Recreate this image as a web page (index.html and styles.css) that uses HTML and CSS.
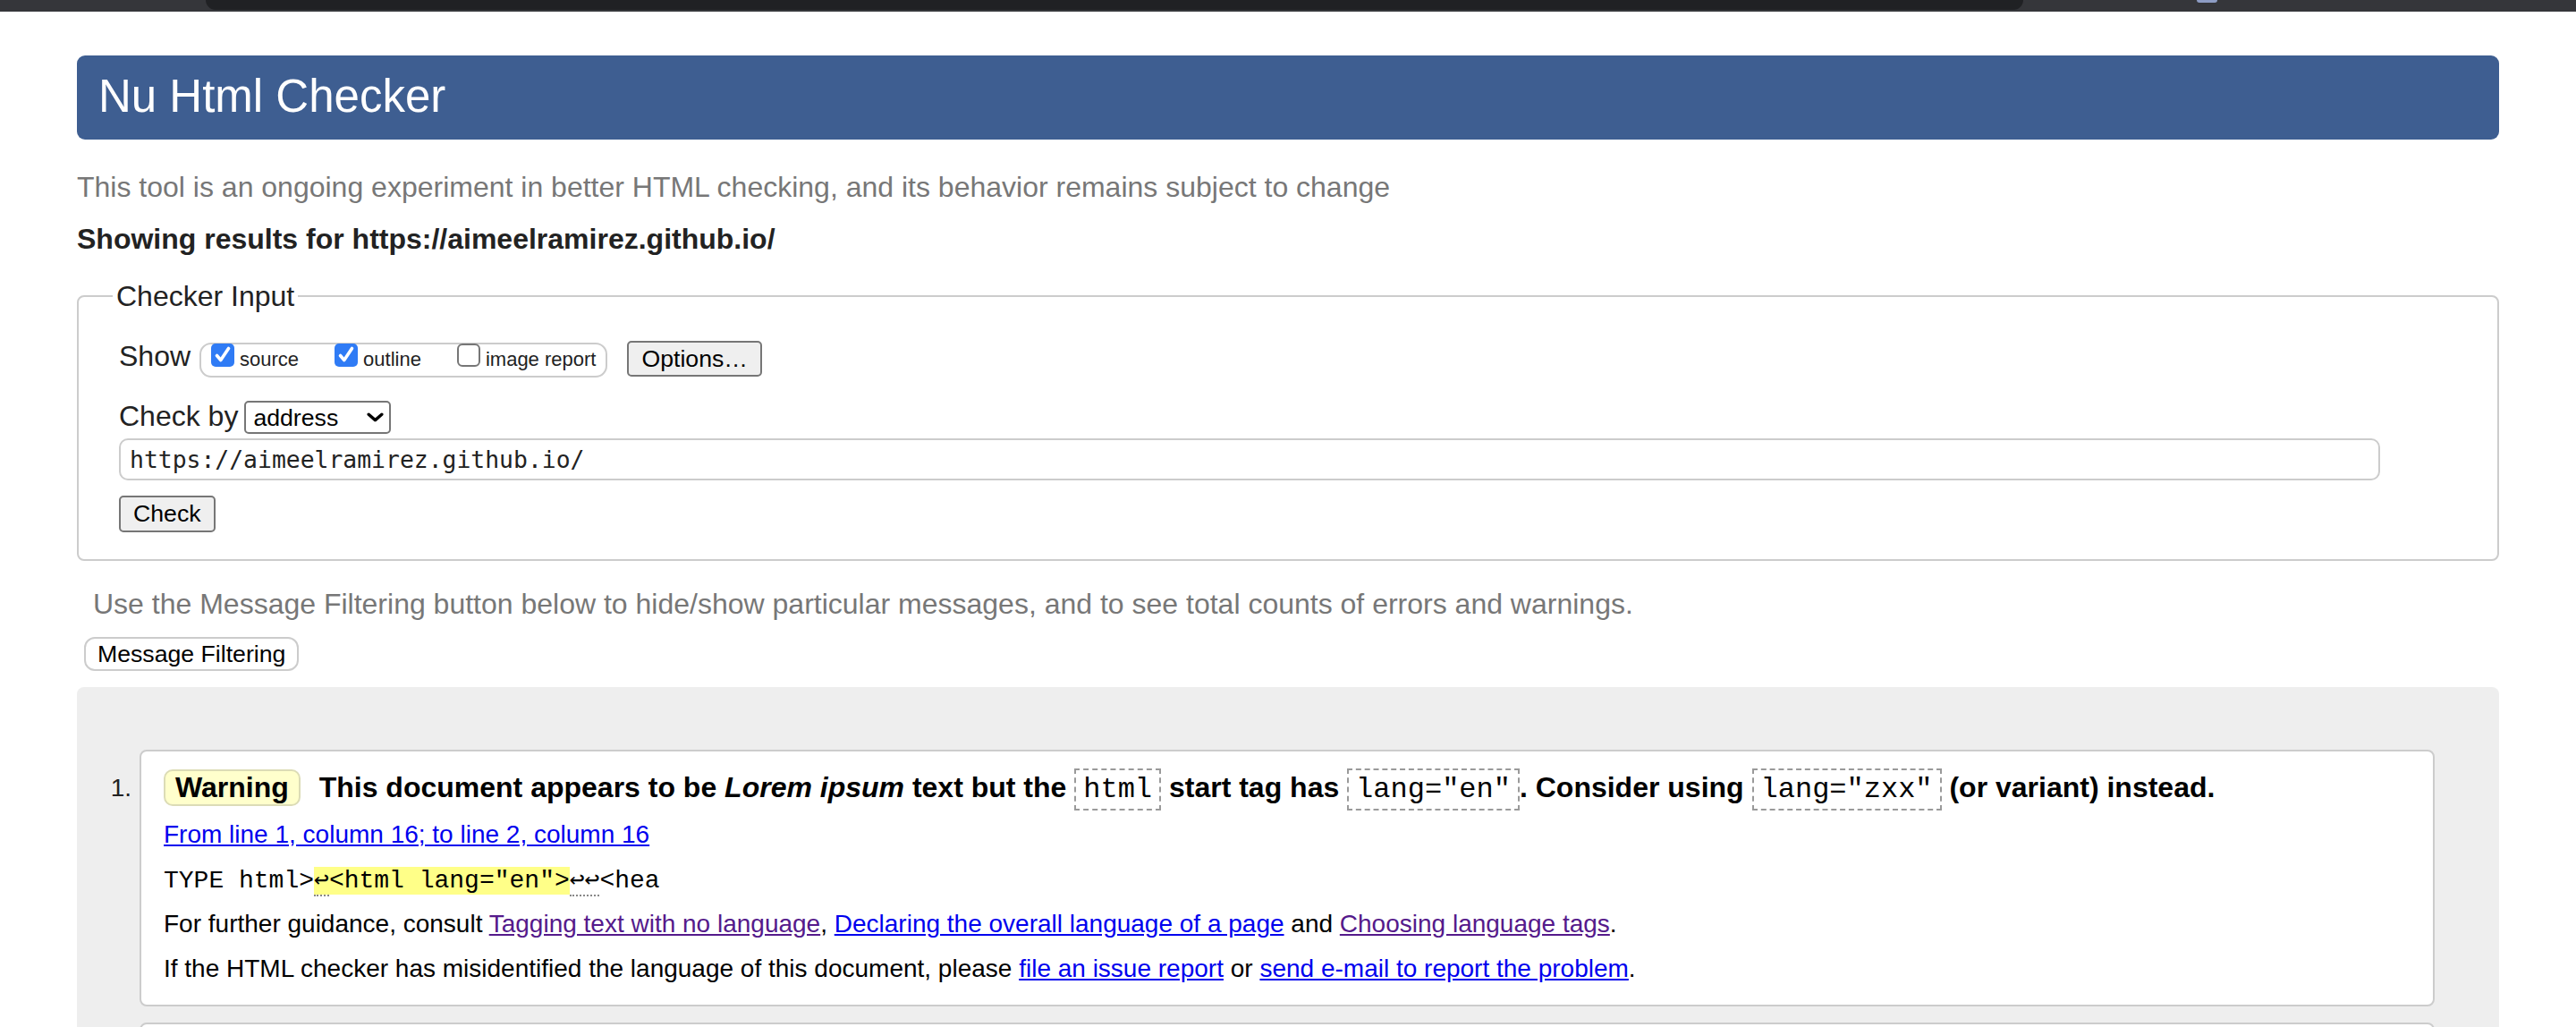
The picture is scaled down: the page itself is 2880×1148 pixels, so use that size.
FILE: index.html
```html
<!DOCTYPE html>
<html lang="en">
<head>
<meta charset="utf-8">
<title>Nu Html Checker</title>
<link rel="stylesheet" href="styles.css">
</head>
<body>
<div class="chrome-bar"><div class="chrome-tab"></div><div class="chrome-pill"></div></div>
<main class="page">
  <h1 class="title">Nu Html Checker</h1>
  <p class="intro">This tool is an ongoing experiment in better HTML checking, and its behavior remains subject to change</p>
  <p class="showing">Showing results for https://aimeelramirez.github.io/</p>
  <fieldset class="checker">
    <legend class="checker-legend">Checker Input</legend>
    <div class="checker-body">
      <div class="row row-show">
        <span class="row-label">Show</span>
        <div class="show-group">
          <label class="opt">
            <svg class="cb" width="26" height="26" viewBox="0 0 26 26"><rect x="0" y="0" width="26" height="26" rx="5" fill="#2f7bf5"/><path d="M6.5 13.5 L10.8 18.5 L19.5 5.5" fill="none" stroke="#fff" stroke-width="3.6" stroke-linecap="round" stroke-linejoin="round"/></svg>
            <span class="opt-text">source</span>
          </label>
          <label class="opt">
            <svg class="cb" width="26" height="26" viewBox="0 0 26 26"><rect x="0" y="0" width="26" height="26" rx="5" fill="#2f7bf5"/><path d="M6.5 13.5 L10.8 18.5 L19.5 5.5" fill="none" stroke="#fff" stroke-width="3.6" stroke-linecap="round" stroke-linejoin="round"/></svg>
            <span class="opt-text">outline</span>
          </label>
          <label class="opt">
            <svg class="cb" width="26" height="26" viewBox="0 0 26 26"><rect x="1" y="1" width="24" height="24" rx="5" fill="#fff" stroke="#767676" stroke-width="2"/></svg>
            <span class="opt-text">image report</span>
          </label>
        </div>
        <button class="btn btn-options" type="button">Options…</button>
      </div>
      <div class="row row-by">
        <span class="row-label">Check by</span>
        <span class="select-wrap">
          <select class="select"><option>address</option></select>
          <svg class="chev" width="19" height="11" viewBox="0 0 19 11"><polyline points="2.2,2.2 9.5,8.6 16.8,2.2" fill="none" stroke="#000" stroke-width="3.4" stroke-linecap="round" stroke-linejoin="round"/></svg>
        </span>
      </div>
      <input class="url" type="url" value="https://aimeelramirez.github.io/">
      <button class="btn btn-check" type="button">Check</button>
    </div>
  </fieldset>
  <p class="filter-note">Use the Message Filtering button below to hide/show particular messages, and to see total counts of errors and warnings.</p>
  <button class="btn-filter" type="button">Message Filtering</button>
  <section class="results">
    <ol class="msgs">
      <li class="msg">
        <span class="num">1.</span>
        <div class="msg-box">
          <p class="msg-title"><strong class="badge">Warning</strong> <span>This document appears to be <em>Lorem ipsum</em> text but the <code class="tok">html</code> start tag has <code class="tok">lang="en"</code>. Consider using <code class="tok">lang="zxx"</code> (or variant) instead.</span></p>
          <p class="line loc"><a class="link" href="#">From line 1, column 16; to line 2, column 16</a></p>
          <p class="line"><code class="extract">TYPE html&gt;<mark class="hl"><b class="lf">↩</b>&lt;html lang="en"&gt;</mark><b class="lf">↩↩</b>&lt;hea</code></p>
          <p class="line">For further guidance, consult <a class="link visited" href="#">Tagging text with no language</a>, <a class="link" href="#">Declaring the overall language of a page</a> and <a class="link visited" href="#">Choosing language tags</a>.</p>
          <p class="line">If the HTML checker has misidentified the language of this document, please <a class="link" href="#">file an issue report</a> or <a class="link" href="#">send e-mail to report the problem</a>.</p>
        </div>
      </li>
      <li class="msg">
        <span class="num"></span>
        <div class="msg-box msg-box-next"></div>
      </li>
    </ol>
  </section>
</main>
</body>
</html>
```

FILE: styles.css
```css
html {
  background: #fff;
}

body {
  margin: 0;
  font-family: "Liberation Sans", Arial, Helvetica, sans-serif;
  color: #222;
}

.chrome-bar {
  height: 13px;
  background: #35363a;
  display: flex;
  align-items: flex-start;
}

.chrome-tab {
  margin-left: 230px;
  width: 2032px;
  height: 11px;
  background: #202124;
  border-radius: 0 0 12px 12px;
}

.chrome-pill {
  margin-left: 194px;
  width: 23px;
  height: 3px;
  background: #8d9cc4;
  border-radius: 0 0 4px 4px;
}

.page {
  margin: 0 86px;
}

.title {
  margin: 49px 0 0;
  height: 94px;
  box-sizing: border-box;
  padding: 17px 24px 0;
  background: #3e5e91;
  border-radius: 9px;
  color: #fff;
  font-size: 51px;
  font-weight: normal;
  line-height: 58px;
}

.intro {
  margin: 35px 0 0;
  font-size: 32px;
  line-height: 36px;
  color: #777;
}

.showing {
  margin: 22px 0 0;
  font-size: 32px;
  line-height: 36px;
  font-weight: bold;
  color: #222;
}

.checker {
  margin: 28px 0 0;
  padding: 0;
  min-width: 0;
  border: 2px solid #ccc;
  border-radius: 8px;
}

.checker-legend {
  margin-left: 38px;
  padding: 0 4px;
  font-size: 32px;
  line-height: 36px;
  color: #222;
}

.checker-body {
  padding: 31px 0 30px 45px;
}

.row {
  display: flex;
  align-items: flex-start;
}

.row-show {
  height: 42px;
}

.row-label {
  font-size: 32px;
  line-height: 36px;
  color: #222;
}

.show-group {
  margin: 3px 0 0 10px;
  height: 39px;
  box-sizing: border-box;
  border: 2px solid #ccc;
  border-radius: 13px;
  padding: 0 11px;
  display: flex;
  align-items: flex-start;
  gap: 40px;
}

.opt {
  display: flex;
  align-items: flex-start;
  gap: 6px;
}

.cb {
  display: block;
  flex: none;
  margin-top: -1px;
}

.opt-text {
  font-size: 22px;
  line-height: 26px;
  padding-top: 4px;
  color: #222;
  white-space: nowrap;
}

.btn {
  display: block;
  box-sizing: border-box;
  background: #efefef;
  border: 2px solid #767676;
  border-radius: 5px;
  font-family: "Liberation Sans", Arial, sans-serif;
  font-size: 26.67px;
  color: #000;
  padding: 0 14px;
  margin: 0;
}

.btn-options {
  margin: 1px 0 0 22px;
  height: 40px;
}

.row-by {
  margin-top: 25px;
  height: 38px;
}

.select-wrap {
  position: relative;
  display: block;
  margin: 1px 0 0 7px;
}

.select {
  display: block;
  appearance: none;
  -webkit-appearance: none;
  width: 164px;
  height: 37px;
  box-sizing: border-box;
  border: 2px solid #767676;
  border-radius: 5px;
  background: #fff;
  padding: 0 0 0 8px;
  margin: 0;
  font-family: "Liberation Sans", Arial, sans-serif;
  font-size: 26.67px;
  color: #000;
}

.chev {
  position: absolute;
  left: 137px;
  top: 13px;
  pointer-events: none;
}

.url {
  display: block;
  margin: 5px 0 0;
  width: 2528px;
  height: 47px;
  box-sizing: border-box;
  border: 2px solid #ccc;
  border-radius: 10px;
  padding: 0 10px;
  font-family: "DejaVu Sans Mono", monospace;
  font-size: 26.4px;
  color: #222;
  background: #fff;
}

.btn-check {
  margin-top: 17px;
  height: 41px;
}

.filter-note {
  margin: 30px 0 0;
  padding-left: 18px;
  font-size: 32px;
  line-height: 36px;
  color: #777;
}

.btn-filter {
  display: block;
  margin: 19px 0 0 8px;
  height: 38px;
  box-sizing: border-box;
  padding: 0 13px;
  border: 2px solid #ccc;
  border-radius: 12px;
  background: #fff;
  font-family: "Liberation Sans", Arial, sans-serif;
  font-size: 26.67px;
  color: #000;
}

.results {
  margin-top: 18px;
  background: #eee;
  border-radius: 8px;
  padding: 70px 72px 40px 0;
}

.msgs {
  margin: 0;
  padding: 0;
  list-style: none;
}

.msg {
  display: flex;
  align-items: flex-start;
  margin-bottom: 18px;
}

.num {
  flex: none;
  width: 70px;
  box-sizing: border-box;
  padding: 25px 9px 0 0;
  text-align: right;
  font-size: 28px;
  line-height: 36px;
  color: #222;
}

.msg-box {
  flex: 1;
  min-width: 0;
  background: #fff;
  border: 2px solid #ccc;
  border-radius: 8px;
  padding: 16px 25px 15px;
}

.msg-box-next {
  min-height: 200px;
}

.msg-title {
  margin: 0 0 4px;
  font-size: 32px;
  line-height: 48px;
  font-weight: bold;
  color: #000;
  white-space: nowrap;
}

.badge {
  display: inline-block;
  padding: 1px 11px;
  margin-right: 12px;
  line-height: 35px;
  border: 2px solid #dcdcb6;
  border-radius: 10px;
  background: #ffffcc;
  font-weight: bold;
}

.tok {
  font-family: "Liberation Mono", "Courier New", monospace;
  font-weight: normal;
  font-size: 32px;
  line-height: 1;
  padding: 3px 8px;
  border: 2px dashed #9a9a9a;
}

.line {
  margin: 0;
  font-size: 28px;
  line-height: 50px;
  color: #000;
  white-space: nowrap;
}

.link {
  color: #0000ee;
  text-decoration: underline;
}

.link.visited {
  color: #551a8b;
}

.extract {
  font-family: "Liberation Mono", "Courier New", monospace;
  font-size: 28px;
  line-height: 1;
  color: #000;
}

.hl {
  background: #ffff88;
  color: #000;
}

.lf {
  font-weight: normal;
  border-bottom: 2px dotted #888;
}
```
